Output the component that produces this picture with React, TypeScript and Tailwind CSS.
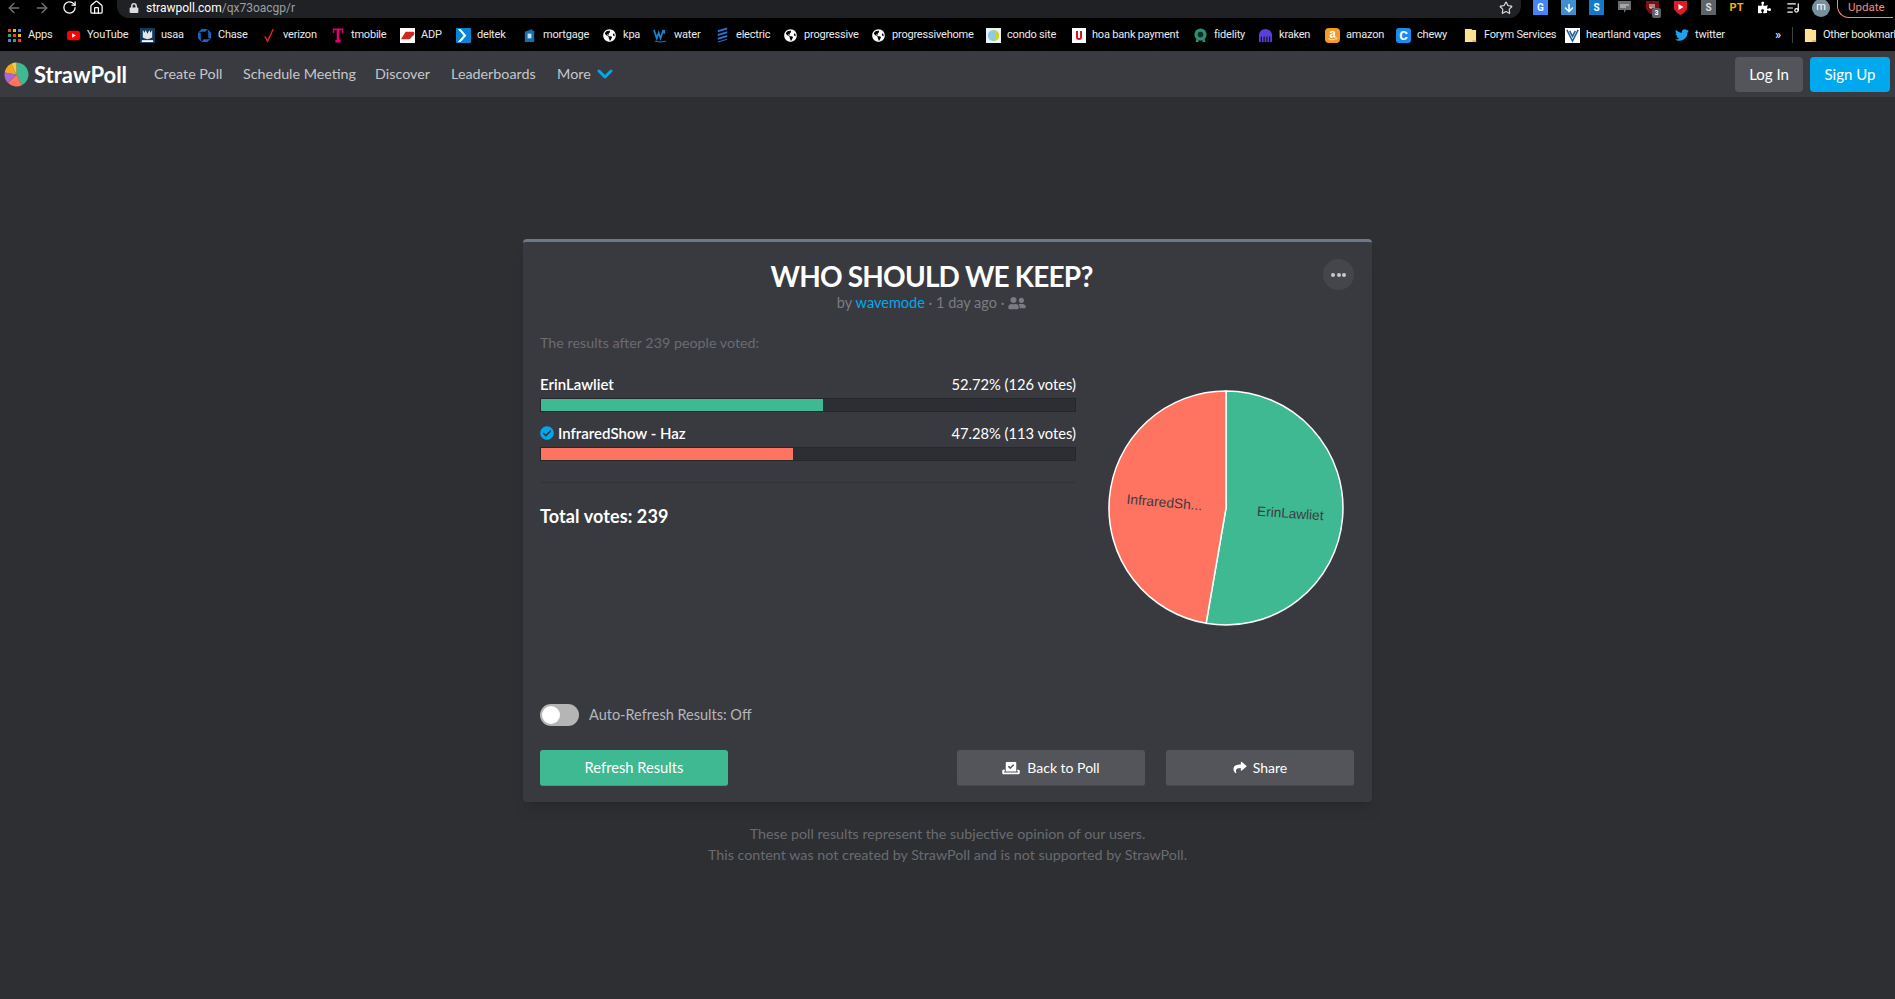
import { ArrowDown, ArrowLeft, ArrowRight, ChevronDown, Home, ListMusic, RotateCw, Star } from "lucide-react";
import { FaAmazon, FaCheckCircle, FaGlobeAmericas, FaLock, FaPuzzlePiece, FaShare, FaTwitter, FaUserFriends, FaVoteYea } from "react-icons/fa";

const CHROME_FONT = "font-['Roboto',sans-serif]";

function AppsIcon() {
  const colors = ["#ea4335", "#fbbc05", "#4285f4", "#34a853", "#ea4335", "#fbbc05", "#4285f4", "#34a853", "#ea4335"];
  return (
    <span className="grid h-[13px] w-[13px] grid-cols-3 gap-[2px]">
      {colors.map((c, i) => (
        <svg key={i} viewBox="0 0 3 3" className="h-[3px] w-[3px]"><rect width="3" height="3" fill={c} /></svg>
      ))}
    </span>
  );
}

function Tile({ className, children }: { className?: string; children?: React.ReactNode }) {
  return <span className={`flex h-[15px] w-[15px] shrink-0 items-center justify-center text-[10px] font-bold leading-none ${className ?? ""}`}>{children}</span>;
}

function Folder() {
  return (
    <svg viewBox="0 0 14 16" className="h-[15px] w-[13px]">
      <path d="M1 1h7l1 1h4v13H1z" fill="#fde293" />
      <path d="M9 13h4v2H9z" fill="#d9b95f" />
    </svg>
  );
}

const BOOKMARKS = [
  { label: "Apps", w: "w-[59px]", icon: <AppsIcon /> },
  {
    label: "YouTube",
    w: "w-[74px]",
    icon: <svg viewBox="0 0 16 16" className="h-[15px] w-[15px]"><rect x="1" y="3" width="14" height="10" rx="3" fill="#f00" /><path d="M6.5 5.5v5l4-2.5z" fill="#fff" /></svg>,
  },
  {
    label: "usaa",
    w: "w-[57px]",
    icon: <svg viewBox="0 0 16 16" className="h-[15px] w-[15px]"><rect width="16" height="16" fill="#12395b" /><path d="M3 2l2 3 1-3 2 4 2-4 1 3 2-3v8q-2 1-5 2-3-1-5-2z" fill="#dfe6ee" /><rect x="2" y="13" width="12" height="2" fill="#fff" /></svg>,
  },
  {
    label: "Chase",
    w: "w-[65px]",
    icon: <svg viewBox="0 0 16 16" className="h-[15px] w-[15px]"><path d="M5 1h6l-2 3H5zM11 1l4 4v6h-3V5zM15 11l-4 4H5l2-3h5zM5 15l-4-4V5h3v6zM1 5l4-4v3z" fill="#1a63c7" /></svg>,
  },
  {
    label: "verizon",
    w: "w-[68px]",
    icon: <svg viewBox="0 0 16 16" className="h-[15px] w-[15px]"><path d="M3 9l3 5 6-13" fill="none" stroke="#e8231b" strokeWidth="1.5" /></svg>,
  },
  {
    label: "tmobile",
    w: "w-[70px]",
    icon: <svg viewBox="0 0 16 18" className="h-[17px] w-[14px]"><path d="M2 1h12v5h-1.5V3H9.5v11H11v3H5v-3h1.5V3h-3v3H2z" fill="#e20074" /></svg>,
  },
  {
    label: "ADP",
    w: "w-[56px]",
    icon: <svg viewBox="0 0 16 16" className="h-[15px] w-[15px]"><rect width="16" height="16" fill="#fff" /><path d="M1 12L6 4h2l-1 8zM7 12l1-8h3q3 0 2 4t-4 4zM10 12l1-8h3q2 0 1 3t-4 2" fill="#d0271d" /></svg>,
  },
  {
    label: "deltek",
    w: "w-[66px]",
    icon: <svg viewBox="0 0 16 16" className="h-[15px] w-[15px]"><rect width="16" height="16" rx="1" fill="#0b84d8" /><path d="M5 1l6 7-6 7H2l6-7-6-7z" fill="#fff" /></svg>,
  },
  {
    label: "mortgage",
    w: "w-[80px]",
    icon: <svg viewBox="0 0 16 16" className="h-[15px] w-[15px]"><path d="M3 4l8-3v2h2v12H3z" fill="#1c6ea4" /><rect x="6" y="6" width="4" height="5" fill="#bfe3f7" /></svg>,
  },
  { label: "kpa", w: "w-[51px]", icon: <FaGlobeAmericas className="text-[13px] text-white" /> },
  {
    label: "water",
    w: "w-[62px]",
    icon: <svg viewBox="0 0 16 16" className="h-[15px] w-[15px]"><path d="M1 2l3 9 2-6 2 6 3-9M12 2v4" fill="none" stroke="#0f86d1" strokeWidth="1.8" /><path d="M2 14q6 2 12 0" fill="none" stroke="#0f86d1" /></svg>,
  },
  {
    label: "electric",
    w: "w-[68px]",
    icon: <svg viewBox="0 0 16 16" className="h-[16px] w-[15px]"><path d="M3 3l10-3v2L3 5zM3 7l10-3v2L3 9zM3 11l10-3v2L3 13zM3 15l10-3v1L3 16z" fill="#2a73d9" /></svg>,
  },
  { label: "progressive", w: "w-[88px]", icon: <FaGlobeAmericas className="text-[13px] text-white" /> },
  { label: "progressivehome", w: "w-[115px]", icon: <FaGlobeAmericas className="text-[13px] text-white" /> },
  {
    label: "condo site",
    w: "w-[85px]",
    icon: <svg viewBox="0 0 16 16" className="h-[15px] w-[15px]"><rect width="16" height="16" fill="#e8f4f8" /><circle cx="8" cy="8" r="6" fill="#8ecae6" /><path d="M8 2a6 6 0 0 1 0 12 9 9 0 0 0 0-12z" fill="#d7d21e" /></svg>,
  },
  {
    label: "hoa bank payment",
    w: "w-[122px]",
    icon: <span className="flex h-[15px] w-[14px] items-center justify-center bg-white"><span className="h-[9px] w-[6px] rounded-b-[3px] border-x-2 border-b-2 border-[#d9141f]" /></span>,
  },
  {
    label: "fidelity",
    w: "w-[65px]",
    icon: <svg viewBox="0 0 16 16" className="h-[15px] w-[15px]"><circle cx="8" cy="7" r="6.5" fill="#2f8f73" /><circle cx="8" cy="7" r="3" fill="#0d2f26" /><path d="M3 12h3v3H3zM10 12h3v3h-3z" fill="#2f8f73" /></svg>,
  },
  {
    label: "kraken",
    w: "w-[67px]",
    icon: <svg viewBox="0 0 16 16" className="h-[15px] w-[15px]"><path d="M1 15V8a7 7 0 0 1 14 0v7h-2V9h-1v6h-2V9H9v6H7V9H6v6H4V9H3v6z" fill="#5741d9" /></svg>,
  },
  { label: "amazon", w: "w-[71px]", icon: <Tile className="rounded-sm bg-[#f59a23] text-white"><FaAmazon className="text-[11px]" /></Tile> },
  { label: "chewy", w: "w-[67px]", icon: <Tile className="rounded-[3px] bg-[#1c8bf0] text-[13px] text-white">C</Tile> },
  { label: "Forym Services", w: "w-[102px]", icon: <Folder /> },
  {
    label: "heartland vapes",
    w: "w-[109px]",
    icon: <svg viewBox="0 0 16 16" className="h-[15px] w-[15px]"><rect width="16" height="16" fill="#fff" /><path d="M2 2l6 12 6-12M5 3l3 6 3-6" fill="none" stroke="#1f5f99" strokeWidth="1.6" /></svg>,
  },
  { label: "twitter", w: "w-[101px]", icon: <FaTwitter className="text-[14px] text-[#1da1f2]" /> },
];

function TopBar() {
  return (
    <div className={`flex h-[19px] items-start overflow-hidden bg-black ${CHROME_FONT}`}>
      <div className="flex h-[15px] w-[117px] shrink-0 items-center gap-[12px] pl-[6px]">
        <ArrowLeft className="h-4 w-4 text-[#70757a]" />
        <ArrowRight className="h-4 w-4 text-[#70757a]" />
        <RotateCw className="h-[15px] w-[15px] text-white" />
        <Home className="h-[15px] w-[15px] text-white" />
      </div>
      <div className="flex h-[18px] w-[1404px] shrink-0 items-center rounded-b-[12px] bg-[#202124] pr-2 pb-[3px] pl-[12px]">
        <FaLock className="h-[10px] w-[10px] text-[#dadce0]" />
        <span className="ml-[7px] text-[12px] leading-none text-white">strawpoll.com<span className="text-[#9aa0a6]">/qx73oacgp/r</span></span>
        <Star className="ml-auto h-[14px] w-[14px] text-[#dadce0]" />
      </div>
      <div className="flex h-[15px] flex-1 items-center gap-[13px] pl-[12px]">
        <Tile className="bg-[#4285f4] text-[8px] text-white">G</Tile>
        <Tile className="bg-[#3d8fd1] text-white"><ArrowDown className="h-3 w-3" strokeWidth={3} /></Tile>
        <Tile className="bg-[#1479c9] text-white">S</Tile>
        <Tile>
          <svg viewBox="0 0 15 15" className="h-[15px] w-[15px]"><path d="M1 1h13v9H9l-2 3v-3H1z" fill="#6b6e72" /><path d="M3 5h9M3 7h6" stroke="#ddd" /></svg>
        </Tile>
        <Tile className="relative">
          <svg viewBox="0 0 15 15" className="h-[15px] w-[15px]"><path d="M1 1h13v8q-2 4-6.500 6Q3 13 1 9z" fill="#7b1113" /><path d="M5 4v4h2V4M9 4v4" fill="none" stroke="#eee" /></svg>
          <span className="absolute top-[8px] left-[7px] flex h-[10px] w-[9px] items-center justify-center rounded-[2px] bg-[#5f6368] text-[7px] text-white">3</span>
        </Tile>
        <Tile>
          <svg viewBox="0 0 15 15" className="h-[15px] w-[15px]"><path d="M1 1h13v8q-2 4-6.500 6Q3 13 1 9z" fill="#e01b24" /><path d="M5.500 4l5 3-5 3z" fill="#fff" /></svg>
        </Tile>
        <Tile className="bg-[#5f6368] text-[#ddd]">S</Tile>
        <Tile className="text-[11px] text-[#f5b400]">PT</Tile>
        <Tile><FaPuzzlePiece className="h-[13px] w-[13px] text-white" /></Tile>
        <Tile><ListMusic className="h-[14px] w-[14px] text-white" /></Tile>
        <span className="-ml-[1px] flex h-[18px] w-[18px] shrink-0 items-center justify-center rounded-full bg-[#78909c] text-[11px] text-white">m</span>
        <span className="-ml-[6px] flex h-[18px] shrink-0 items-center self-start rounded-bl-[12px] border-b border-l border-[#f28b82] pr-2 pb-[2px] pl-[10px] text-[11.500px] text-[#f28b82]">Update</span>
      </div>
    </div>
  );
}

function BookmarkBar() {
  return (
    <div className={`flex h-[32px] items-center overflow-hidden bg-black pl-[7px] text-[11px] tracking-[-0.2px] text-[#e8eaed] ${CHROME_FONT}`}>
      {BOOKMARKS.map((b) => (
        <div key={b.label} className={`flex shrink-0 items-center gap-[6px] ${b.w}`}>
          <span className="flex w-[15px] shrink-0 justify-center">{b.icon}</span>
          <span className="whitespace-nowrap">{b.label}</span>
        </div>
      ))}
      <span className="shrink-0 text-[13px] text-white">»</span>
      <span className="mx-[11px] h-[16px] w-px shrink-0 bg-[#3c4043]" />
      <div className="flex shrink-0 items-center gap-[6px]">
        <Folder />
        <span className="whitespace-nowrap">Other bookmarks</span>
      </div>
    </div>
  );
}

function Logo() {
  return (
    <svg viewBox="-13 -13 26 26" className="h-[25px] w-[25px]">
      <path d="M0 0V-12.5A12.5 12.5 0 0 1 5.5 11.2z" fill="#3eb991" />
      <path d="M0 0L5.5 11.2A12.5 12.5 0 0 1 -9 8.7z" fill="#ff7361" />
      <path d="M0 0L-9 8.7A12.5 12.5 0 0 1 -12.3 -2z" fill="#a966d8" />
      <path d="M0 0L-12.3 -2A12.5 12.5 0 0 1 -5.5 -11.2z" fill="#f5a623" />
      <path d="M0 0L-5.5 -11.2A12.5 12.5 0 0 1 0 -12.5z" fill="#f7c948" />
    </svg>
  );
}

function Navbar() {
  return (
    <div className="flex h-[46px] items-center bg-[#393b41] pr-[5px] pl-[4px]">
      <Logo />
      <span className="ml-[5px] text-[22px] font-bold text-white">StrawPoll</span>
      <nav className="ml-[27px] flex items-center text-[14.300px] text-[#c5c7cb]">
        <a className="w-[89px]">Create Poll</a>
        <a className="w-[132px]">Schedule Meeting</a>
        <a className="w-[76px]">Discover</a>
        <a className="w-[106px]">Leaderboards</a>
        <a>More</a>
        <ChevronDown className="ml-[2px] h-6 w-6 text-[#00a9ee]" strokeWidth={3} />
      </nav>
      <a className="ml-auto flex h-[35px] w-[68px] items-center justify-center rounded bg-[#54555b] text-[15px] text-white">Log In</a>
      <a className="ml-[7px] flex h-[35px] w-[80px] items-center justify-center rounded bg-[#00a9ee] text-[15px] text-white">Sign Up</a>
    </div>
  );
}

function ResultBar({ fill, width }: { fill: string; width: string }) {
  return (
    <div className="mt-[5px] h-[14px] border border-[#26272b] bg-[#2d2e33]">
      <div className={`h-full ${fill} ${width}`} />
    </div>
  );
}

function Pie() {
  return (
    <svg viewBox="0 0 258 258" className="h-[258px] w-[258px] shrink-0">
      <path d="M129 129V12A117 117 0 1 1 109.100 244.300z" fill="#3eb991" stroke="#fff" strokeWidth="1.5" />
      <path d="M129 129L109.100 244.300A117 117 0 0 1 129 12z" fill="#ff7361" stroke="#fff" strokeWidth="1.5" />
      <text x="193" y="139" textAnchor="middle" transform="rotate(4 193 139)" fontFamily="Liberation Sans, sans-serif" fontSize="13.600" fill="#3c3d42">ErinLawliet</text>
      <text x="67" y="128" textAnchor="middle" transform="rotate(5 67 128)" fontFamily="Liberation Sans, sans-serif" fontSize="13.800" fill="#3c3d42">InfraredSh...</text>
    </svg>
  );
}

function PollCard() {
  return (
    <div className="mx-auto mt-[142px] h-[563px] w-[849px] rounded border-t-[3px] border-[#6e7887] bg-[#393a40] pt-[16px] pr-[18px] pl-[17px] shadow-lg">
      <div className="flex items-start">
        <div className="min-w-0 flex-1 text-center">
          <h1 className="text-[28px] leading-[36px] font-bold tracking-[-0.8px] text-white uppercase">Who should we keep?</h1>
          <div className="flex items-center justify-center text-[14.500px] leading-[18px] text-[#7a7c82]">
            by&nbsp;<a className="text-[#00a9ee]">wavemode</a>&nbsp;· 1 day ago ·&nbsp;
            <FaUserFriends className="h-[14px] w-[18px]" />
          </div>
        </div>
        <button className="mt-[1px] flex h-[31px] w-[31px] items-center justify-center rounded-full bg-[#45464c]">
          <span className="flex gap-[1.5px]">
            <i className="h-[4px] w-[4px] rounded-full bg-[#c7c8cc]" />
            <i className="h-[4px] w-[4px] rounded-full bg-[#c7c8cc]" />
            <i className="h-[4px] w-[4px] rounded-full bg-[#c7c8cc]" />
          </span>
        </button>
      </div>

      <div className="mt-[22px] flex">
        <div className="w-[536px] shrink-0">
          <p className="text-[14.300px] leading-[18px] text-[#696b71]">The results after 239 people voted:</p>
          <div className="mt-[23px] flex justify-between text-[15px] leading-[18px] text-white">
            <span className="font-semibold">ErinLawliet</span>
            <span className="text-[14.700px]">52.72% (126 votes)</span>
          </div>
          <ResultBar fill="bg-[#3eb991]" width="w-[52.72%]" />
          <div className="mt-[12px] flex justify-between text-[15px] leading-[18px] text-white">
            <span className="flex items-center gap-[4px] font-semibold"><FaCheckCircle className="h-[14px] w-[14px] text-[#00a9ee]" />InfraredShow - Haz</span>
            <span className="text-[14.700px]">47.28% (113 votes)</span>
          </div>
          <ResultBar fill="bg-[#ff7361]" width="w-[47.28%]" />
          <div className="mt-[21px] h-px bg-[#323338]" />
          <p className="mt-[22px] text-[18px] leading-[22px] font-bold tracking-[0.1px] text-white">Total votes: 239</p>
        </div>
        <div className="mt-[45px] ml-[21px]">
          <Pie />
        </div>
      </div>

      <div className="mt-[67px] flex items-center">
        <span className="flex h-[22px] w-[39px] items-center rounded-full bg-[#b5b5b5] pl-[2px]">
          <span className="h-[18px] w-[18px] rounded-full bg-white" />
        </span>
        <span className="ml-[10px] text-[14.500px] text-[#b5b6ba]">Auto-Refresh Results: Off</span>
      </div>

      <div className="mt-[24px] flex">
        <button className="h-[36px] w-[188px] rounded-[3px] border-b border-[#35a27e] bg-[#3eb991] text-[14.700px] text-white">Refresh Results</button>
        <button className="ml-auto flex h-[36px] w-[188px] items-center justify-center gap-[7px] rounded-[3px] border-b border-[#48494f] bg-[#54555b] text-[14px] text-white"><FaVoteYea className="h-[14px] w-[18px]" />Back to Poll</button>
        <button className="ml-[21px] flex h-[36px] w-[188px] items-center justify-center gap-[6px] rounded-[3px] border-b border-[#48494f] bg-[#54555b] text-[14px] text-white"><FaShare className="h-[13px] w-[14px]" />Share</button>
      </div>
    </div>
  );
}

export default function App() {
  return (
    <div className="h-[999px] overflow-hidden bg-[#2e2f33] font-['Lato',sans-serif]">
      <TopBar />
      <BookmarkBar />
      <Navbar />
      <PollCard />
      <div className="mt-[21px] text-center text-[14.300px] leading-[21px] text-[#696b71]">
        <p>These poll results represent the subjective opinion of our users.</p>
        <p>This content was not created by StrawPoll and is not supported by StrawPoll.</p>
      </div>
    </div>
  );
}
